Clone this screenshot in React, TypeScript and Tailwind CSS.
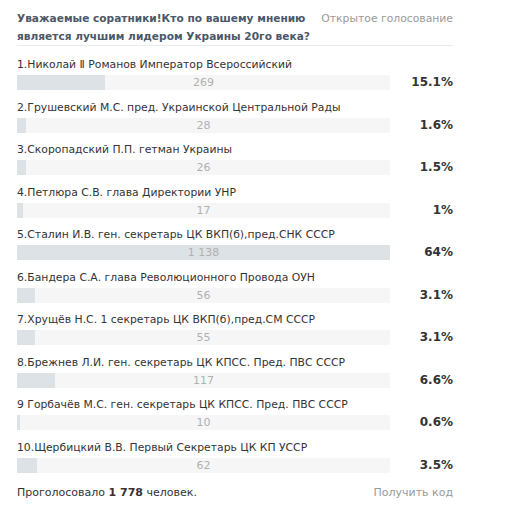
const options = [
  { label: "1.Николай Ⅱ Романов Император Всероссийский", votes: 269, count: "269", pct: "15.1%" },
  { label: "2.Грушевский М.С. пред. Украинской Центральной Рады", votes: 28, count: "28", pct: "1.6%" },
  { label: "3.Скоропадский П.П. гетман Украины", votes: 26, count: "26", pct: "1.5%" },
  { label: "4.Петлюра С.В. глава Директории УНР", votes: 17, count: "17", pct: "1%" },
  { label: "5.Сталин И.В. ген. секретарь ЦК ВКП(б),пред.СНК СССР", votes: 1138, count: "1 138", pct: "64%" },
  { label: "6.Бандера С.А. глава Революционного Провода ОУН", votes: 56, count: "56", pct: "3.1%" },
  { label: "7.Хрущёв Н.С. 1 секретарь ЦК ВКП(б),пред.СМ СССР", votes: 55, count: "55", pct: "3.1%" },
  { label: "8.Брежнев Л.И. ген. секретарь ЦК КПСС. Пред. ПВС СССР", votes: 117, count: "117", pct: "6.6%" },
  { label: "9 Горбачёв М.С. ген. секретарь ЦК КПСС. Пред. ПВС СССР", votes: 10, count: "10", pct: "0.6%" },
  { label: "10.Щербицкий В.В. Первый Секретарь ЦК КП УССР", votes: 62, count: "62", pct: "3.5%" },
];

const maxVotes = 1138;

function PollRow({ label, votes, count, pct }: (typeof options)[number]) {
  return (
    <div className="h-[42.5px]">
      <div className="text-[10.8px] leading-[16px] text-[#333] whitespace-nowrap">{label}</div>
      <div className="flex items-center mt-[2px] h-[15px]">
        <div className="relative w-[373px] h-[15px] bg-[#f6f6f6]">
          <div className="h-full bg-[#dde2e7]" style={{ width: `${(votes / maxVotes) * 100}%` }} />
          <div className="absolute inset-0 flex items-center justify-center text-[11px] leading-[15px] text-[#b0b0b0]">
            {count}
          </div>
        </div>
        <div className="flex-1 text-right text-[12px] leading-[15px] font-bold text-[#333]">{pct}</div>
      </div>
    </div>
  );
}

export default function App() {
  return (
    <div className="w-[507px] h-[520px] bg-white pl-[17px] font-['DejaVu_Sans',sans-serif]">
      <div className="w-[436px]">
        <div className="flex justify-between items-start pt-[10px] border-b border-[#e9ebee] h-[46px]">
          <div className="text-[10.6px] font-bold leading-[17.5px] text-[#4c5867] whitespace-nowrap">
            Уважаемые соратники!Кто по вашему мнению
            <br />
            является лучшим лидером Украины 20го века?
          </div>
          <div className="text-[10.8px] leading-[17.5px] text-[#999] whitespace-nowrap">Открытое голосование</div>
        </div>
        <div className="mt-[11px]">
          {options.map((o) => (
            <PollRow key={o.label} {...o} />
          ))}
        </div>
        <div className="flex justify-between text-[11px] leading-[18px] mt-[1.5px]">
          <div className="text-[#333]">
            Проголосовало <span className="font-bold">1 778</span> человек.
          </div>
          <div className="text-[#999]">Получить код</div>
        </div>
      </div>
    </div>
  );
}
